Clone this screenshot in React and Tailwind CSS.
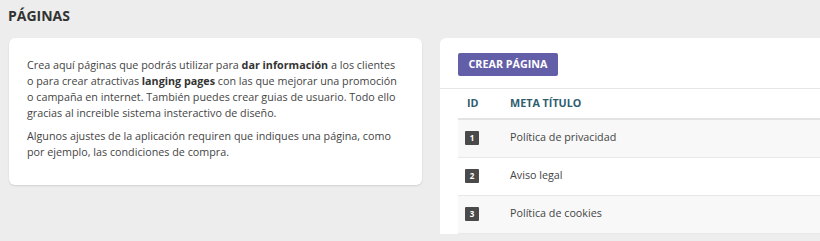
const rows = [
  { id: 1, title: "Política de privacidad" },
  { id: 2, title: "Aviso legal" },
  { id: 3, title: "Política de cookies" },
];

const App = () => {
  return (
    <div
      className="min-h-[241px] w-[820px] overflow-hidden bg-[#ededed] text-[#333]"
      style={{ fontFamily: '"Open Sans", sans-serif' }}
    >
      <h1 className="px-2 pt-[7px] text-[14px] font-bold leading-[18px] text-[#333]">
        PÁGINAS
      </h1>
      <div className="mt-[13px] flex items-start gap-[18px] pl-[9px]">
        <div className="w-[413px] rounded-[6px] bg-white px-[18px] pb-[25px] pt-[19px] text-[10.75px] leading-[16px] text-[#444] shadow-[0_1px_2px_rgba(0,0,0,0.12)]">
          <p>
            Crea aquí páginas que podrás utilizar para{" "}
            <b className="font-bold text-[#333]">dar información</b> a los
            clientes o para crear atractivas{" "}
            <b className="font-bold text-[#333]">langing pages</b> con las que
            mejorar una promoción o campaña en internet. También puedes crear
            guias de usuario. Todo ello gracias al increible sistema
            insteractivo de diseño.
          </p>
          <p className="mt-[7px]">
            Algunos ajustes de la aplicación requiren que indiques una página,
            como por ejemplo, las condiciones de compra.
          </p>
        </div>
        <div className="flex-1 rounded-tl-[6px] bg-white">
          <div className="border-b border-[#e6e6e6] px-[18px] pb-[12px] pt-[12px]">
            <button className="h-[23px] w-[100px] rounded-[2px] bg-[#635ea8] text-[10.75px] font-bold text-white">
              CREAR PÁGINA
            </button>
          </div>
          <div className="pl-[18px]">
            <div className="flex h-[31px] items-center border-b-2 border-[#e3e3e3] text-[10.75px] font-bold text-[#2f5d70]">
              <div className="w-[52px] pl-[9px]">ID</div>
              <div>META TÍTULO</div>
            </div>
            {rows.map((r, i) => (
              <div
                key={r.id}
                className={
                  "flex h-[38px] items-center border-b border-[#e8e8e8] text-[10.75px] text-[#444] " +
                  (i % 2 === 0 ? "bg-[#f8f8f8]" : "bg-white")
                }
              >
                <div className="w-[52px] pl-[7px]">
                  <span className="flex h-[14px] w-[14px] items-center justify-center rounded-[1px] bg-[#4a4a4a] text-[8px] font-bold text-white">
                    {r.id}
                  </span>
                </div>
                <div className="-mt-[2px]">{r.title}</div>
              </div>
            ))}
          </div>
        </div>
      </div>
    </div>
  );
};

export default App;
